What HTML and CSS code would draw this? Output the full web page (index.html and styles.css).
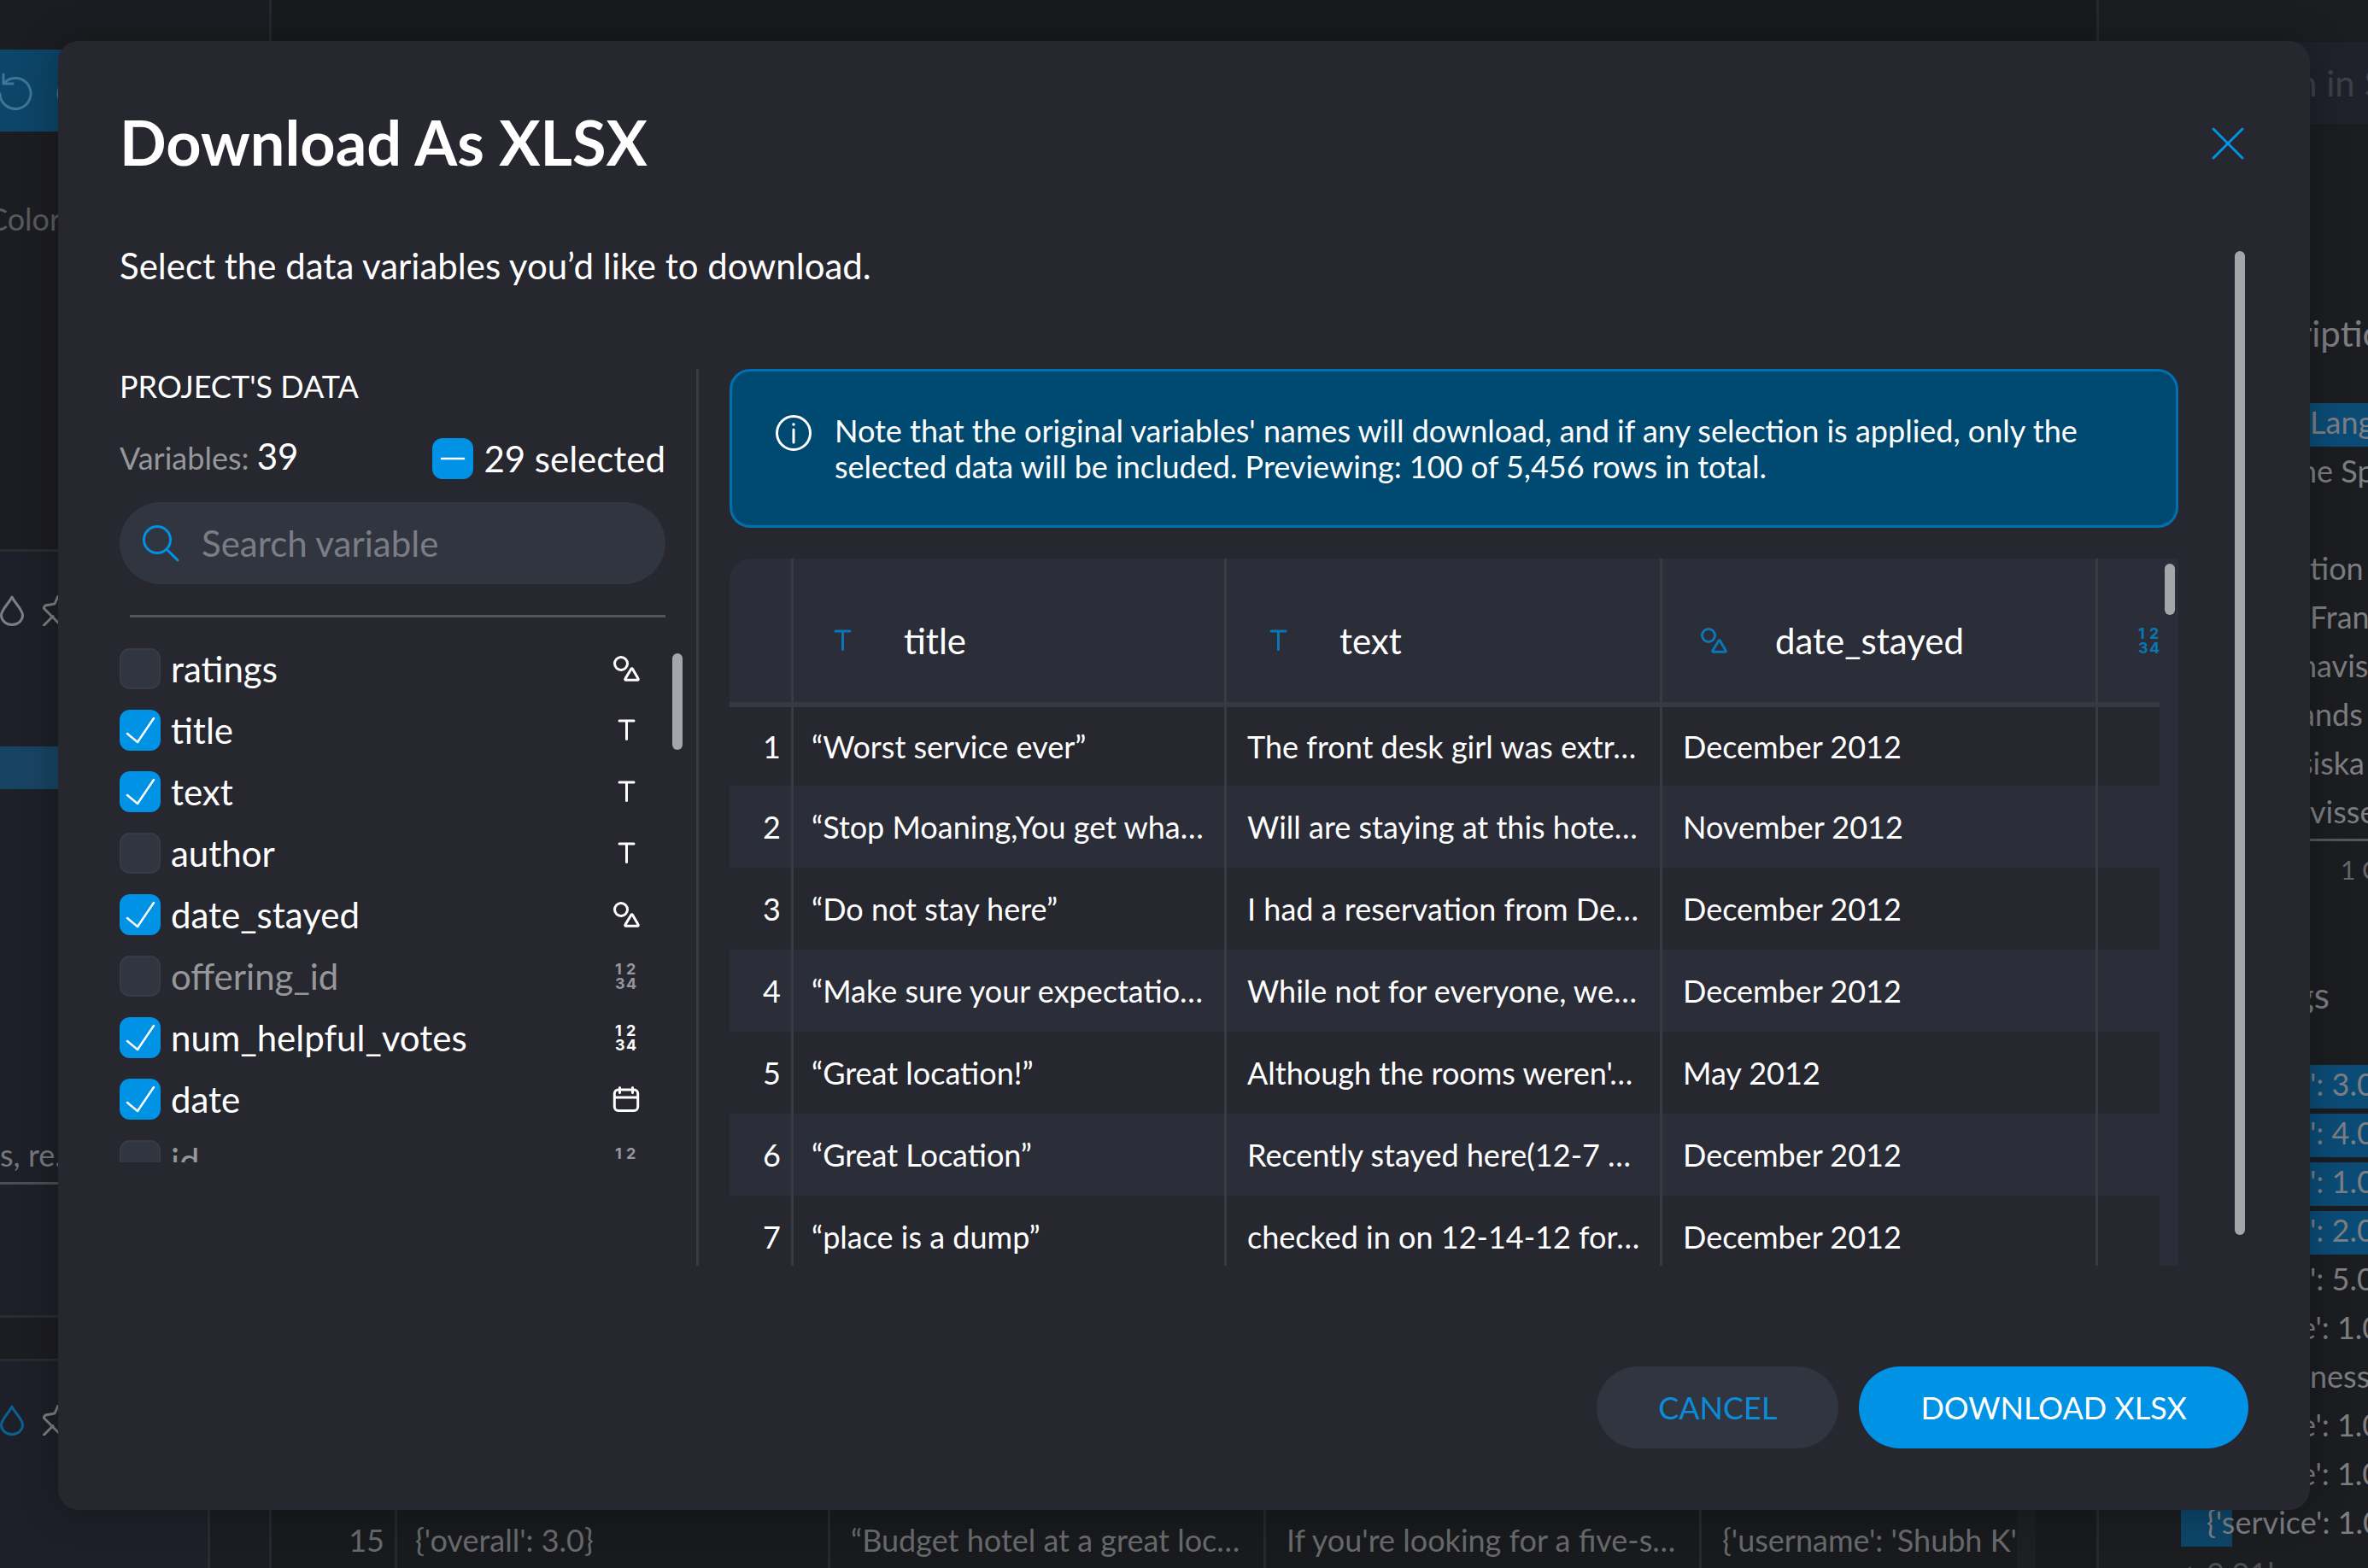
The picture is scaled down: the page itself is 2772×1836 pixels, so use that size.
FILE: index.html
```html
<!DOCTYPE html>
<html lang="en">
<head>
<meta charset="utf-8">
<title>Download As XLSX</title>
<link rel="stylesheet" href="styles.css">
</head>
<body>
<svg class="defs" aria-hidden="true">
  <symbol id="i-category" viewBox="0 0 36 36"><circle cx="12" cy="12" r="7.500"/><path d="M23.900 18.200 17 29.600a1 1 0 0 0 .9 1.700h13.200a1 1 0 0 0 .9-1.700L25.400 18.200a.9.9 0 0 0-1.500 0Z"/></symbol>
  <symbol id="i-text" viewBox="0 0 36 36"><path d="M10 7h17M18.500 7v21.500"/></symbol>
  <symbol id="i-number" viewBox="0 0 36 36"><text x="5 18" y="16">12</text><text x="5 18" y="33">34</text></symbol>
  <symbol id="i-date" viewBox="0 0 36 36"><rect x="4.300" y="7" width="27.400" height="24.600" rx="4.500"/><path d="M4.500 16h27M10.500 4.500v6M25.500 4.500v6"/></symbol>
  <symbol id="i-drop" viewBox="0 0 36 36"><path d="M18 2c4 8 12.500 15 12.500 21.500a12.500 11 0 0 1-25 0C5.500 17 14 10 18 2Z"/></symbol>
  <symbol id="i-pin" viewBox="0 0 36 36"><path d="M1 35.500 12 24.500M18 1l-4 9-11 2-2 3 19 19 3-2 2-11 9-4Z"/></symbol>
</svg>

<div class="app">
  <aside class="sidebar">
    <div class="history">
      <svg class="history-icon" viewBox="0 0 48 48"><path d="M12 5v11h11M13 15a18 18 0 1 1-5 13"/></svg>
      <svg class="history-icon" viewBox="0 0 48 48"><path d="M36 5v11H25M35 15a18 18 0 1 0 5 13"/></svg>
    </div>
    <p class="side-label">Color</p>
    <section class="side-card">
      <div class="side-tools"><svg><use href="#i-drop"/></svg><svg><use href="#i-pin"/></svg></div>
      <div class="side-bar"></div>
      <p class="side-field">s, re...</p>
    </section>
    <section class="side-card side-card-last">
      <div class="side-tools side-tools-active"><svg><use href="#i-drop"/></svg><svg><use href="#i-pin"/></svg></div>
    </section>
  </aside>

  <main class="workspace">
    <div class="sheet">
      <table class="grid grid-dim">
        <colgroup><col class="col-index-wide"><col class="col"><col class="col"><col class="col"><col class="col"></colgroup>
        <tbody><tr><td>15</td><td>{'overall': 3.0}</td><td>“Budget hotel at a great loc…</td><td>If you're looking for a five-s…</td><td>{'username': 'Shubh K'</td></tr></tbody>
      </table>
    </div>
    <div class="sheet-gutter"></div>
  </main>

  <aside class="details">
    <p class="details-search">n in S</p>
    <h2 class="details-title">ription</h2>
    <ul class="values">
      <li class="value on">Lang</li>
      <li class="value lead">ne Sp</li>
      <li class="value"></li>
      <li class="value">tion</li>
      <li class="value">Fran</li>
      <li class="value lead">navise</li>
      <li class="value lead">ands</li>
      <li class="value lead">siska</li>
      <li class="value">visse</li>
    </ul>
    <p class="details-count">1 O</p>
    <h2 class="details-title details-title-second">gs</h2>
    <ul class="values">
      <li class="value on">': 3.0</li>
      <li class="value on">': 4.0</li>
      <li class="value on">': 1.0</li>
      <li class="value on">': 2.0</li>
      <li class="value">': 5.0</li>
      <li class="value lead">e': 1.0</li>
      <li class="value">ness</li>
      <li class="value lead">e': 1.0</li>
      <li class="value lead">e': 1.0</li>
      <li class="value partial">{'service': 1.0</li>
    </ul>
    <p class="details-more">+ 2.01k more</p>
  </aside>
</div>

<div class="overlay">
  <div class="modal" role="dialog" aria-labelledby="dialog-title">
    <header class="modal-head">
      <h1 class="modal-title" id="dialog-title">Download As XLSX</h1>
      <button class="close" type="button" aria-label="Close"><svg viewBox="0 0 48 48"><path d="M7 7l34 34M41 7 7 41"/></svg></button>
    </header>

    <div class="modal-body">
      <p class="intro">Select the data variables you’d like to download.</p>
      <div class="columns">
        <section class="picker">
          <h2 class="picker-title">PROJECT'S DATA</h2>
          <div class="summary">
            <p class="summary-count"><span class="muted">Variables:</span> <span class="big">39</span></p>
            <label class="pick"><input class="check mixed" type="checkbox">29 selected</label>
          </div>
          <label class="search">
            <svg viewBox="0 0 48 48"><circle cx="20" cy="20" r="15.500"/><path d="m31 31 13 13"/></svg>
            <input class="search-input" type="text" placeholder="Search variable" aria-label="Search variable">
          </label>
          <hr class="rule">
          <div class="list-wrap">
            <ul class="list">
              <li class="item"><label class="pick"><input class="check" type="checkbox">ratings</label><svg class="icon"><use href="#i-category"/></svg></li>
              <li class="item"><label class="pick"><input class="check" type="checkbox" checked>title</label><svg class="icon"><use href="#i-text"/></svg></li>
              <li class="item"><label class="pick"><input class="check" type="checkbox" checked>text</label><svg class="icon"><use href="#i-text"/></svg></li>
              <li class="item"><label class="pick"><input class="check" type="checkbox">author</label><svg class="icon"><use href="#i-text"/></svg></li>
              <li class="item"><label class="pick"><input class="check" type="checkbox" checked>date_stayed</label><svg class="icon"><use href="#i-category"/></svg></li>
              <li class="item off"><label class="pick"><input class="check" type="checkbox">offering_id</label><svg class="icon"><use href="#i-number"/></svg></li>
              <li class="item"><label class="pick"><input class="check" type="checkbox" checked>num_helpful_votes</label><svg class="icon"><use href="#i-number"/></svg></li>
              <li class="item"><label class="pick"><input class="check" type="checkbox" checked>date</label><svg class="icon"><use href="#i-date"/></svg></li>
              <li class="item off"><label class="pick"><input class="check" type="checkbox">id</label><svg class="icon"><use href="#i-number"/></svg></li>
            </ul>
            <span class="thumb list-thumb"></span>
          </div>
        </section>

        <section class="preview">
          <div class="note">
            <svg viewBox="0 0 48 48"><circle cx="24" cy="24" r="19.500"/><path d="M24 20v15"/><circle class="dot" cx="24" cy="14" r="1.800"/></svg>
            <p>Note that the original variables' names will download, and if any selection is applied, only the selected data will be included. Previewing: 100 of 5,456 rows in total.</p>
          </div>
          <div class="table-wrap">
            <div class="table-view">
              <table class="grid">
                <colgroup><col class="col-index"><col class="col"><col class="col"><col class="col"><col class="col"></colgroup>
                <thead>
                  <tr>
                    <th></th>
                    <th><span class="head"><svg class="icon"><use href="#i-text"/></svg>title</span></th>
                    <th><span class="head"><svg class="icon"><use href="#i-text"/></svg>text</span></th>
                    <th><span class="head"><svg class="icon"><use href="#i-category"/></svg>date_stayed</span></th>
                    <th><span class="head"><svg class="icon"><use href="#i-number"/></svg></span></th>
                  </tr>
                </thead>
                <tbody>
                  <tr><td>1</td><td>“Worst service ever”</td><td>The front desk girl was extr…</td><td>December 2012</td><td></td></tr>
                  <tr><td>2</td><td>“Stop Moaning,You get wha…</td><td>Will are staying at this hote…</td><td>November 2012</td><td></td></tr>
                  <tr><td>3</td><td>“Do not stay here”</td><td>I had a reservation from De…</td><td>December 2012</td><td></td></tr>
                  <tr><td>4</td><td>“Make sure your expectatio…</td><td>While not for everyone, we…</td><td>December 2012</td><td></td></tr>
                  <tr><td>5</td><td>“Great location!”</td><td>Although the rooms weren'…</td><td>May 2012</td><td></td></tr>
                  <tr><td>6</td><td>“Great Location”</td><td>Recently stayed here(12-7 …</td><td>December 2012</td><td></td></tr>
                  <tr><td>7</td><td>“place is a dump”</td><td>checked in on 12-14-12 for…</td><td>December 2012</td><td></td></tr>
                </tbody>
              </table>
            </div>
            <span class="thumb table-thumb"></span>
          </div>
        </section>
      </div>
      <span class="thumb body-thumb"></span>
    </div>

    <footer class="modal-foot">
      <button class="btn btn-quiet" type="button">CANCEL</button>
      <button class="btn btn-main" type="button">DOWNLOAD XLSX</button>
    </footer>
  </div>
</div>
</body>
</html>
```
FILE: styles.css
```css
:root {
  --surface: #26272f;
  --raised: #2b2d38;
  --control: #313540;
  --line: #393b42;
  --blue: #0092e5;
  --thumb: #a5a6a9;
  --muted: #96979b;
}

* { box-sizing: border-box; }

body {
  margin: 0;
  height: 100vh;
  overflow: hidden;
  position: relative;
  background: #191a1d;
  color: #fff;
  font: 400 36px/42px Lato, sans-serif;
}

h1, h2, p, ul { margin: 0; padding: 0; font-weight: 400; }
ul { list-style: none; }
button, input { font: inherit; color: inherit; }
button { border: 0; padding: 0; cursor: pointer; }
svg { fill: none; stroke: currentColor; stroke-linecap: round; stroke-linejoin: round; flex: none; }
svg text { font: 700 18px Inter, sans-serif; fill: currentColor; stroke: none; }
.defs { position: absolute; width: 0; height: 0; }

/* Page behind the dialog */
.app { display: flex; height: 100vh; overflow: hidden; }

.sidebar { width: 318px; flex: none; padding-top: 58px; background: #1c1d22; border-right: 3px solid #26282d; overflow: hidden; }
.history { display: flex; gap: 24px; align-items: center; height: 96px; background: #0d4568; color: #3c7798; }
.history-icon { width: 48px; height: 48px; stroke-width: 3; }
.history-icon:first-child { margin-left: -8px; }
.side-label { margin: 80px 0 365px -15px; line-height: 44px; color: #595a5e; }
.side-card { width: 246px; height: 900px; padding-top: 51px; background: #1d2028; border: solid #2a2c31; border-width: 3px 3px 3px 0; }
.side-card-last { margin-top: 48px; }
.side-tools { display: flex; gap: 18px; margin-left: -4px; color: #7d7e82; }
.side-tools svg { width: 36px; height: 36px; stroke-width: 3; }
.side-tools-active svg:first-child { color: #0d5f92; }
.side-bar { height: 50px; margin-top: 141px; background: #184463; }
.side-field { margin-top: 406px; padding-bottom: 10px; line-height: 44px; color: #77787c; border-bottom: 3px solid #4d4e52; }

.workspace { flex: 1; min-width: 0; display: flex; align-items: flex-end; overflow: hidden; }
.sheet { flex: 1; min-width: 0; overflow: hidden; margin-bottom: -15px; }
.sheet-gutter { width: 22px; height: 96px; margin-right: 71px; background: #1d1f22; }

.details { width: 318px; flex: none; padding: 49px 0 0 96px; background: #1c1d21; border-left: 3px solid #26282d; white-space: nowrap; overflow: hidden; color: #7d7e82; }
.details-search { height: 96px; padding-left: 136px; font-size: 42px; line-height: 96px; background: #1f222b; color: #3d4045; }
.details-title { margin: 220px 0 57px; padding-left: 138px; font-size: 42px; line-height: 50px; }
.values { display: flex; flex-direction: column; gap: 6px; }
.value { height: 51px; line-height: 45px; padding-left: 151px; }
.value.lead { padding-left: 139px; }
.value.on { background: #0b4c77; }
.value.partial { padding-left: 30px; background: linear-gradient(#0d4568, #0d4568) no-repeat 0 0 / 60px 100%; }
.details-count { margin-top: 3px; padding: 15px 0 0 187px; border-top: 3px solid #55565a; font-size: 30px; line-height: 36px; color: #66676b; }
.details-title-second { margin: 104px 0 57px; padding-left: 134px; }
.details-more { margin-top: 9px; line-height: 45px; color: #4d4e51; }

/* Dialog */
.overlay { position: absolute; inset: 0; display: flex; padding: 48px 68px 68px; }
.modal { flex: 1; min-width: 0; display: flex; flex-direction: column; padding: 72px; background: var(--surface); border-radius: 24px; box-shadow: 0 0 48px rgba(0, 0, 0, .3); }
.modal-head { display: flex; align-items: center; justify-content: space-between; height: 96px; }
.modal-title { padding-bottom: 4px; font-size: 72px; line-height: 84px; font-weight: 700; }
.close { width: 48px; height: 48px; background: none; color: var(--blue); }
.close svg { display: block; stroke-width: 3; }

.modal-body { position: relative; flex: 1; min-height: 0; display: flex; flex-direction: column; margin: 72px 0 118px; padding-right: 82px; }
.intro { font-size: 42px; line-height: 46px; margin-bottom: 98px; }
.columns { flex: 1; min-height: 0; display: flex; }
.thumb { position: absolute; width: 12px; border-radius: 6px; background: var(--thumb); }
.body-thumb { top: 6px; right: 4px; bottom: 36px; }

.picker { width: 678px; flex: none; padding-right: 36px; border-right: 3px solid var(--line); }
.picker-title { font-size: 36px; line-height: 40px; }
.summary { display: flex; justify-content: space-between; margin: 41px 0 27px; }
.summary-count { line-height: 42px; }
.muted { color: var(--muted); }
.big { font-size: 42px; }
.pick { display: flex; align-items: center; gap: 12px; font-size: 42px; line-height: 48px; }

.check { appearance: none; width: 48px; height: 48px; margin: 0; flex: none; border: 2px solid #383b46; border-radius: 12px; background: var(--control); }
.check:checked, .check.mixed { border: 0; background: var(--blue) center / 48px 48px no-repeat; }
.check:checked { background-image: url("data:image/svg+xml,%3Csvg xmlns='http://www.w3.org/2000/svg' viewBox='0 0 48 48'%3E%3Cpath d='M9 28l12 10 19-28' fill='none' stroke='white' stroke-width='2.500' stroke-linecap='round' stroke-linejoin='round'/%3E%3C/svg%3E"); }
.check.mixed { background-image: url("data:image/svg+xml,%3Csvg xmlns='http://www.w3.org/2000/svg' viewBox='0 0 48 48'%3E%3Cpath d='M11 24h26' stroke='white' stroke-width='2.500' stroke-linecap='round'/%3E%3C/svg%3E"); }

.search { display: flex; align-items: center; gap: 24px; height: 96px; padding: 0 24px; border-radius: 48px; background: var(--control); color: var(--blue); }
.search svg { width: 48px; height: 48px; stroke-width: 3; }
.search-input { flex: 1; min-width: 0; border: 0; padding: 0; outline: 0; background: none; font-size: 42px; line-height: 48px; color: #fff; }
.search-input::placeholder { color: #7b7d84; opacity: 1; }
.rule { margin: 36px 0 24px 12px; border: 0; height: 3px; background: #55565b; }

.list-wrap { position: relative; }
.list { max-height: 614px; overflow: hidden; }
.item { display: flex; align-items: center; justify-content: space-between; height: 72px; padding-right: 28px; }
.item.off { color: var(--muted); }
.icon { width: 36px; height: 36px; stroke-width: 3; }
.list-thumb { top: 18px; right: -20px; height: 113px; }

.preview { flex: 1; min-width: 0; display: flex; flex-direction: column; gap: 36px; padding-left: 36px; }
.note { display: flex; gap: 24px; padding: 48px; border: 3px solid #0070b0; border-radius: 24px; background: #004a72; }
.note svg { width: 48px; height: 48px; stroke-width: 3; }
.dot { fill: currentColor; stroke: none; }

.table-wrap { position: relative; flex: 1; min-height: 0; padding-right: 22px; overflow: hidden; border-radius: 24px 0 0 0; background: var(--raised); }
.table-view { height: 100%; overflow: hidden; background: var(--surface); }
.table-thumb { top: 6px; right: 4px; height: 60px; }

.grid { width: 2112px; table-layout: fixed; border-collapse: separate; border-spacing: 0; }
.col { width: 510px; }
.col-index { width: 72px; }
.col-index-wide { width: 144px; }
.grid td, .grid th { padding: 0 24px; border-right: 3px solid var(--line); white-space: nowrap; overflow: hidden; text-align: left; font-weight: 400; }
.grid td { height: 96px; }
.grid tbody tr:nth-child(even) { background: var(--raised); }
.grid td:first-child, .grid th:first-child { padding: 0 12px 0 0; border-right: 0; text-align: right; }
.grid td:nth-child(2), .grid th:nth-child(2) { border-left: 3px solid var(--line); padding-left: 21px; }
.grid th { height: 174px; padding: 0 24px 48px 42px; vertical-align: bottom; background: var(--raised); border-bottom: 6px solid #363843; }
.grid th:nth-child(2) { padding-left: 39px; }
.grid thead + tbody tr:first-child td { height: 92px; }
.head { display: flex; align-items: center; gap: 54px; height: 48px; font-size: 42px; line-height: 48px; }
.head .icon { color: #0a76b5; }
.grid-dim { width: 2184px; color: #68696b; }
.grid-dim td { border-color: #26282c; }
.grid-dim td:nth-child(2) { border-color: #26282c; }

.modal-foot { display: flex; justify-content: flex-end; gap: 24px; }
.btn { height: 96px; padding: 0 72px; border-radius: 48px; }
.btn-quiet { background: var(--control); color: #0a8cdb; }
.btn-main { background: var(--blue); }
```
